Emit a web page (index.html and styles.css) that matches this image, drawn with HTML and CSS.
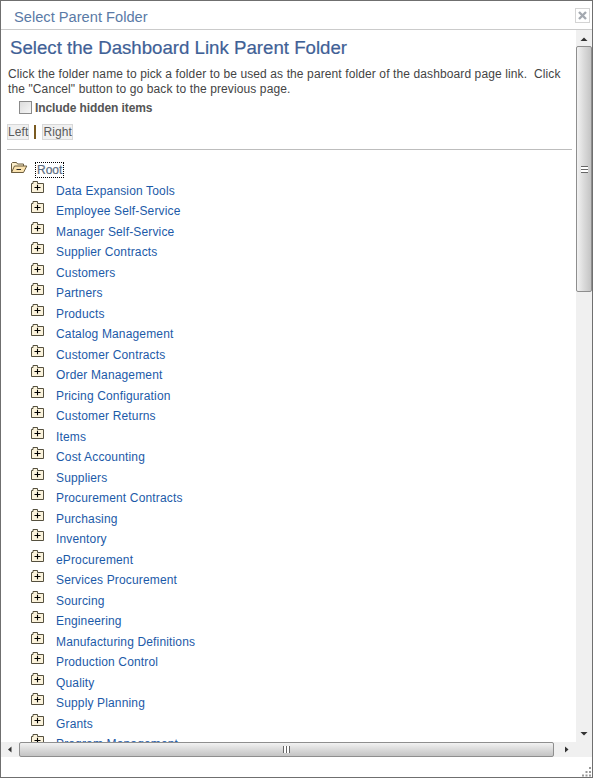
FILE: index.html
```html
<!DOCTYPE html>
<html lang="en">
<head>
<meta charset="utf-8">
<title>Select Parent Folder</title>
<link rel="stylesheet" href="styles.css">
</head>
<body>
<div class="window">
  <header class="titlebar">
    <span class="title">Select Parent Folder</span>
    <span class="close"><svg width="11" height="11" viewBox="0 0 11 11"><path d="M2 2l7 7M9 2l-7 7" stroke="#a4a9b0" stroke-width="2.4" fill="none"/></svg></span>
  </header>
  <div class="middle">
    <main class="content">
      <h1 class="heading">Select the Dashboard Link Parent Folder</h1>
      <p class="intro">Click the folder name to pick a folder to be used as the parent folder of the dashboard page link.&nbsp; Click the "Cancel" button to go back to the previous page.</p>
      <label class="hidden-option"><span class="checkbox"></span>Include hidden items</label>
      <div class="tabs"><span class="tab">Left</span><span class="tab-sep"></span><span class="tab">Right</span></div>
      <hr class="rule">
      <div class="root-row">
        <svg class="folder-open" width="18" height="13" viewBox="0 0 18 13"><path d="M1.500 11.500V2.500L2.500 1.500H6.500L7.500 3H13.500V5" fill="#fbeecb" stroke="#6b5d3f"/><path d="M1.500 11.500L4.500 5H16.800L13.500 11.500Z" fill="#fbe3b0" stroke="#6b5d3f"/><path d="M6.500 8.500H11" stroke="#222" stroke-width="1"/></svg>
        <span class="root-label">Root</span>
      </div>
      <ul class="tree">
        <li><svg class="folder" viewBox="0 0 14 14"><use href="#f"/></svg><a href="#">Data Expansion Tools</a></li>
        <li><svg class="folder" viewBox="0 0 14 14"><use href="#f"/></svg><a href="#">Employee Self-Service</a></li>
        <li><svg class="folder" viewBox="0 0 14 14"><use href="#f"/></svg><a href="#">Manager Self-Service</a></li>
        <li><svg class="folder" viewBox="0 0 14 14"><use href="#f"/></svg><a href="#">Supplier Contracts</a></li>
        <li><svg class="folder" viewBox="0 0 14 14"><use href="#f"/></svg><a href="#">Customers</a></li>
        <li><svg class="folder" viewBox="0 0 14 14"><use href="#f"/></svg><a href="#">Partners</a></li>
        <li><svg class="folder" viewBox="0 0 14 14"><use href="#f"/></svg><a href="#">Products</a></li>
        <li><svg class="folder" viewBox="0 0 14 14"><use href="#f"/></svg><a href="#">Catalog Management</a></li>
        <li><svg class="folder" viewBox="0 0 14 14"><use href="#f"/></svg><a href="#">Customer Contracts</a></li>
        <li><svg class="folder" viewBox="0 0 14 14"><use href="#f"/></svg><a href="#">Order Management</a></li>
        <li><svg class="folder" viewBox="0 0 14 14"><use href="#f"/></svg><a href="#">Pricing Configuration</a></li>
        <li><svg class="folder" viewBox="0 0 14 14"><use href="#f"/></svg><a href="#">Customer Returns</a></li>
        <li><svg class="folder" viewBox="0 0 14 14"><use href="#f"/></svg><a href="#">Items</a></li>
        <li><svg class="folder" viewBox="0 0 14 14"><use href="#f"/></svg><a href="#">Cost Accounting</a></li>
        <li><svg class="folder" viewBox="0 0 14 14"><use href="#f"/></svg><a href="#">Suppliers</a></li>
        <li><svg class="folder" viewBox="0 0 14 14"><use href="#f"/></svg><a href="#">Procurement Contracts</a></li>
        <li><svg class="folder" viewBox="0 0 14 14"><use href="#f"/></svg><a href="#">Purchasing</a></li>
        <li><svg class="folder" viewBox="0 0 14 14"><use href="#f"/></svg><a href="#">Inventory</a></li>
        <li><svg class="folder" viewBox="0 0 14 14"><use href="#f"/></svg><a href="#">eProcurement</a></li>
        <li><svg class="folder" viewBox="0 0 14 14"><use href="#f"/></svg><a href="#">Services Procurement</a></li>
        <li><svg class="folder" viewBox="0 0 14 14"><use href="#f"/></svg><a href="#">Sourcing</a></li>
        <li><svg class="folder" viewBox="0 0 14 14"><use href="#f"/></svg><a href="#">Engineering</a></li>
        <li><svg class="folder" viewBox="0 0 14 14"><use href="#f"/></svg><a href="#">Manufacturing Definitions</a></li>
        <li><svg class="folder" viewBox="0 0 14 14"><use href="#f"/></svg><a href="#">Production Control</a></li>
        <li><svg class="folder" viewBox="0 0 14 14"><use href="#f"/></svg><a href="#">Quality</a></li>
        <li><svg class="folder" viewBox="0 0 14 14"><use href="#f"/></svg><a href="#">Supply Planning</a></li>
        <li><svg class="folder" viewBox="0 0 14 14"><use href="#f"/></svg><a href="#">Grants</a></li>
        <li><svg class="folder" viewBox="0 0 14 14"><use href="#f"/></svg><a href="#">Program Management</a></li>
      </ul>
    </main>
    <div class="vbar">
      <svg class="arrow-v" width="16" height="16" viewBox="0 0 16 16"><path d="M4.500 11L8 7.500L11.500 11Z" fill="#333"/></svg>
      <div class="vthumb"><span class="grip-v"></span></div>
      <div class="vtrack"></div>
      <svg class="arrow-v" width="16" height="16" viewBox="0 0 16 16"><path d="M4.500 6L8 9.500L11.500 6Z" fill="#333"/></svg>
    </div>
  </div>
  <div class="hrow">
    <div class="hbar">
      <svg class="arrow-h" width="18" height="15" viewBox="0 0 18 15"><path d="M10.500 4.500L7 7.500L10.500 10.500Z" fill="#333"/></svg>
      <div class="hthumb"><span class="grip-h"></span></div>
      <svg class="arrow-h" width="22" height="15" viewBox="0 0 22 15"><path d="M11 4.500L14.500 7.500L11 10.500Z" fill="#333"/></svg>
    </div>
    <div class="corner"></div>
  </div>
  <footer class="footer">
    <svg class="grip" width="11" height="11" viewBox="0 0 11 11"><path d="M8 1h2v2H8zM4.500 5h2v2h-2zM8 5h2v2H8zM1 8.500h2v2H1zM4.500 8.500h2v2h-2zM8 8.500h2v2H8z" fill="#999"/></svg>
  </footer>
</div>
<svg class="defs" width="0" height="0"><defs><g id="f"><path d="M1.500 12.500V3.500H3V1.500H7.500V3.500H13.500V12.500Z" fill="#fbf3dc" stroke="#55503f"/><path d="M4.500 7.500H10.500M7.500 4.800V10.200" stroke="#000" stroke-width="1.100"/></g></defs></svg>
</body>
</html>
```
FILE: styles.css
```css
* { box-sizing: border-box; }
html, body { margin: 0; padding: 0; background: #fff; }
body { width: 593px; height: 778px; overflow: hidden; font-family: "Liberation Sans", Arial, sans-serif; }
.defs { position: absolute; }
.window { width: 593px; height: 778px; border: 1px solid #6f6f6f; display: flex; flex-direction: column; background: #fff; }
.titlebar { height: 29px; flex: none; border-bottom: 1px solid #cbcbcb; display: flex; align-items: center; justify-content: space-between; padding: 2px 2px 0 13px; }
.title { font-size: 14.67px; color: #5a7aa6; margin-top: 2px; }
.close { width: 15px; height: 15px; border: 1px solid #d4d4d4; display: flex; align-items: center; justify-content: center; margin-top: -1px; }
.middle { flex: 1; min-height: 0; display: flex; }
.content { flex: 1; min-width: 0; overflow: hidden; padding: 0 4px 0 6px; }
.heading { margin: 6px 0 0 3px; font-size: 18.67px; line-height: 24px; font-weight: normal; color: #3f6196; -webkit-text-stroke: 0.2px #3f6196; }
.intro { margin: 7px 0 0 1px; font-size: 12px; line-height: 15px; letter-spacing: 0.11px; color: #444; }
.hidden-option { display: flex; align-items: center; margin: 4px 0 0 12px; font-size: 12px; line-height: 15px; font-weight: bold; letter-spacing: -0.1px; color: #555; }
.checkbox { width: 13px; height: 13px; border: 1px solid #8a8a8a; background: linear-gradient(135deg, #dcdcdc, #f6f6f6); margin: 0 3px 2px 0; }
.tabs { display: flex; align-items: center; margin-top: 8px; height: 16px; }
.tab { height: 16px; padding: 0; font-size: 12px; line-height: 14px; color: #5a5a5a; background: #f0f0f0; border: 1px solid #d8d8d8; letter-spacing: 0.1px; }
.tab-sep { width: 2px; height: 14px; background: #7a5a20; margin: 0 6px 0 5px; }
.rule { border: 0; border-top: 1px solid #bdbdbd; margin: 9px 0 0 0; height: 0; }
.root-row { display: flex; align-items: flex-start; height: 21.75px; margin-top: 10px; padding-left: 3px; }
.folder-open { margin-top: 1px; flex: none; }
.root-label { margin: 3px 0 0 8px; padding: 0 1px; font-size: 12px; line-height: 14px; color: #5c6c80; -webkit-text-stroke: 0.2px #5c6c80; outline: 1px dotted #000; }
.tree { list-style: none; margin: 0; padding: 0 0 0 23px; }
.tree li { height: 20.5px; display: flex; align-items: flex-start; }
.folder { width: 14px; height: 14px; flex: none; margin-top: -2px; }
.tree a { margin: 2px 0 0 12px; font-size: 12px; line-height: 14px; letter-spacing: 0.15px; color: #1c5aa8; text-decoration: none; white-space: nowrap; }
.vbar { width: 16px; flex: none; background: #f0f0f0; display: flex; flex-direction: column; }
.arrow-v { flex: none; display: block; }
.vthumb { height: 246px; flex: none; border: 1px solid #8e8e8e; border-radius: 2px; background: linear-gradient(90deg, #f2f2f2, #dcdcdc 45%, #c4c4c4); display: flex; align-items: center; justify-content: center; }
.grip-v { width: 7px; height: 7px; border-top: 1px solid #666; border-bottom: 1px solid #666; background: linear-gradient(#fff 0 2px, #666 2px 3px, #fff 3px); }
.vtrack { flex: 1; }
.hrow { height: 15px; flex: none; display: flex; }
.hbar { flex: 1; background: #f0f0f0; display: flex; align-items: center; }
.arrow-h { flex: none; display: block; }
.hthumb { flex: 1; height: 15px; border: 1px solid #8e8e8e; border-radius: 2px; background: linear-gradient(#f2f2f2, #dcdcdc 45%, #c4c4c4); display: flex; align-items: center; justify-content: center; }
.grip-h { width: 7px; height: 7px; border-left: 1px solid #666; border-right: 1px solid #666; background: linear-gradient(90deg, #fff 0 2px, #666 2px 3px, #fff 3px); }
.corner { width: 16px; background: #f0f0f0; }
.footer { flex: none; height: 20px; display: flex; justify-content: flex-end; align-items: flex-end; }
.grip { display: block; }
```
